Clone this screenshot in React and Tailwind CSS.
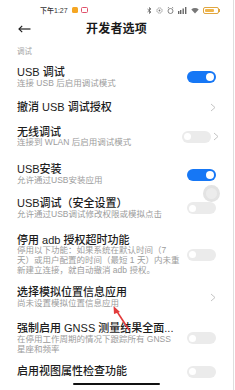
import React from "react";

const font = { fontFamily: '"Liberation Sans", "Noto Sans CJK SC", sans-serif' };

const Toggle = ({ on, className = "" }) => (
  <div
    className={`w-[29px] h-[12px] rounded-full flex items-center px-[2px] ${
      on ? "bg-[#1677f5] justify-end" : "bg-[#ebebeb] justify-start"
    } ${className}`}
  >
    <div className={`rounded-full bg-white ${on ? "w-[8px] h-[8px]" : "w-[7px] h-[7px]"}`} />
  </div>
);

const Chevron = () => (
  <svg width="6" height="9" viewBox="0 0 6 9" className="shrink-0">
    <polyline points="1,1 5,4.5 1,8" fill="none" stroke="#c4c4c4" strokeWidth="1" />
  </svg>
);

const Row = ({ title, lines = [], right, mt }) => (
  <div className={`flex items-center justify-between ${mt}`}>
    <div className="min-w-0">
      <div className="text-[11px] leading-[12.8px] font-medium text-[#1c1c1c] whitespace-nowrap">{title}</div>
      {lines.map((l, i) => (
        <div key={i} className="text-[8.5px] leading-[9.9px] text-[#9c9c9c] whitespace-nowrap">
          {l}
        </div>
      ))}
    </div>
    {right}
  </div>
);

const StatusBar = () => (
  <div className="h-[20px] flex items-center justify-between pl-[40px] pr-[13px]">
    <div className="flex items-center gap-[3px]">
      <span className="text-[7px] leading-[9px] text-[#333] font-medium">下午1:27</span>
      <div className="w-[6px] h-[6px] rounded-[1.5px] bg-[#f5a623] ml-[1px]" />
      <div className="w-[7px] h-[6px] rounded-[1.5px] border border-[#e0506a]" />
    </div>
    <div className="flex items-center gap-[4px]">
      <svg width="5" height="7" viewBox="0 0 5 7">
        <polyline points="0.5,2 4,5 2.5,6.5 2.5,0.5 4,2 0.5,5" fill="none" stroke="#666" strokeWidth="0.8" />
      </svg>
      <svg width="7" height="7" viewBox="0 0 7 7">
        <circle cx="3.5" cy="3.5" r="2.6" fill="none" stroke="#777" strokeWidth="0.9" strokeDasharray="1.2 0.8" />
        <circle cx="3.5" cy="3.5" r="0.9" fill="#777" />
      </svg>
      <svg width="7" height="7" viewBox="0 0 7 7">
        <circle cx="3.5" cy="4" r="2.5" fill="none" stroke="#777" strokeWidth="0.9" />
        <line x1="0.8" y1="1" x2="2" y2="0.3" stroke="#777" strokeWidth="0.8" />
        <line x1="6.2" y1="1" x2="5" y2="0.3" stroke="#777" strokeWidth="0.8" />
      </svg>
      <svg width="9" height="7" viewBox="0 0 9 7">
        <rect x="0" y="4" width="1.4" height="3" fill="#666" />
        <rect x="2" y="3" width="1.4" height="4" fill="#666" />
        <rect x="4.5" y="1.5" width="1.4" height="5.5" fill="#666" />
        <rect x="7" y="0" width="1.4" height="7" fill="#666" />
      </svg>
      <svg width="8" height="7" viewBox="0 0 8 7">
        <path d="M0.3 2.4 A5.5 5.5 0 0 1 7.7 2.4 L4 6.6 Z" fill="#777" />
      </svg>
      <div className="flex items-center">
        <div className="w-[16px] h-[7px] rounded-[2px] border border-[#e0a640] p-[1px] flex">
          <div className="w-[9px] h-full rounded-[1px] bg-[#f0b54a]" />
        </div>
        <div className="w-[1px] h-[3px] bg-[#e0a640]" />
      </div>
    </div>
  </div>
);

export default function App() {
  return (
    <div className="relative w-[234px] h-[390px] bg-white border-r border-[#dedede] overflow-hidden" style={font}>
      <StatusBar />

      <div className="h-[17px] relative flex items-center justify-center">
        <svg width="13" height="8" viewBox="0 0 13 8" className="absolute left-[18px] top-[5px]">
          <line x1="1" y1="4" x2="12.5" y2="4" stroke="#222" strokeWidth="1.2" />
          <polyline points="4.2,0.8 1,4 4.2,7.2" fill="none" stroke="#222" strokeWidth="1.2" />
        </svg>
        <span className="text-[12px] leading-[14px] font-semibold text-[#1a1a1a] tracking-[0.2px]">开发者选项</span>
      </div>

      <div className="px-[17px]">
        <div className="mt-[10px] text-[7.5px] leading-[10px] text-[#a3a3a3]">调试</div>

        <Row
          mt="mt-[9px]"
          title="USB 调试"
          lines={["连接 USB 后启用调试模式"]}
          right={<Toggle on />}
        />
        <Row
          mt="mt-[12px]"
          title="撤消 USB 调试授权"
          right={<Chevron />}
        />
        <Row
          mt="mt-[12px]"
          title="无线调试"
          lines={["连接到 WLAN 后启用调试模式"]}
          right={
            <div className="flex items-center gap-[2px] mr-[-3px]">
              <Toggle className="w-[27px] h-[11px]" />
              <Chevron />
            </div>
          }
        />
        <Row
          mt="mt-[15px]"
          title="USB安装"
          lines={["允许通过USB安装应用"]}
          right={<Toggle on />}
        />
        <Row
          mt="mt-[11px]"
          title="USB调试（安全设置）"
          lines={["允许通过USB调试修改权限或模拟点击"]}
          right={<Toggle />}
        />
        <Row
          mt="mt-[14px]"
          title="停用 adb 授权超时功能"
          lines={[
            "停用以下功能：如果系统在默认时间（7",
            "天）或用户配置的时间（最短 1 天）内未重",
            "新建立连接，就自动撤消 adb 授权。",
          ]}
          right={<Toggle />}
        />
        <Row
          mt="mt-[10px]"
          title="选择模拟位置信息应用"
          lines={["尚未设置模拟位置信息应用"]}
          right={<Chevron />}
        />
        <Row
          mt="mt-[13px]"
          title="强制启用 GNSS 测量结果全面..."
          lines={["在停用工作周期的情况下跟踪所有 GNSS", "星座和频率"]}
          right={<Toggle />}
        />
        <Row
          mt="mt-[11px]"
          title="启用视图属性检查功能"
          right={<Toggle />}
        />
      </div>

      <div className="absolute left-[203px] top-[185px] w-[17px] h-[17px] rounded-full bg-[#e3e3e3] flex items-center justify-center">
        <div className="w-[11px] h-[11px] rounded-full bg-[#ececec]" />
      </div>

      <svg width="30" height="30" viewBox="0 0 30 30" className="absolute left-[108px] top-[304px]">
        <line x1="21" y1="26" x2="8" y2="6" stroke="#e23b3b" strokeWidth="1.6" />
        <polygon points="5.5,2 12,8 6,10" fill="#e23b3b" />
      </svg>

      <div className="absolute left-[73px] top-[383px] w-[87px] h-[2px] rounded-full bg-[#111]" />
    </div>
  );
}
